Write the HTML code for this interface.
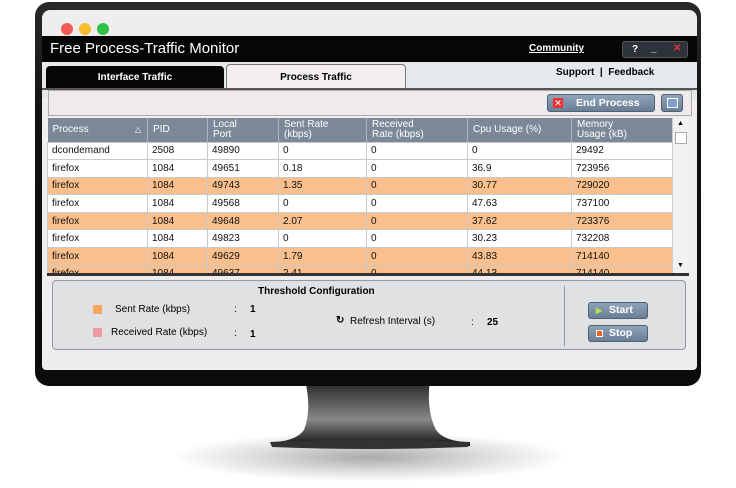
<!DOCTYPE html><html><head><style>
*{margin:0;padding:0;box-sizing:border-box}
body{width:736px;height:488px;background:#fff;font-family:"Liberation Sans",sans-serif;position:relative;overflow:hidden}
.abs{position:absolute}
.bezel{left:35px;top:2px;width:666px;height:384px;background:linear-gradient(#2a2a2a,#111 30%,#0b0b0b);border-radius:14px}
.screen{left:42px;top:10px;width:655px;height:360px;background:#efedee;border-radius:8px 8px 4px 4px;overflow:hidden}
.dot{width:12px;height:12px;border-radius:50%;top:13px}
table{border-collapse:collapse;font-size:10px;color:#111}
td{height:17.6px;border:1px solid #c9c9c9;padding-left:4px;white-space:nowrap}
th{background:#7a8898;color:#fff;font-weight:normal;text-align:left;padding-left:5px;height:24px;border-right:1px solid #aab4c0;font-size:10px;line-height:10px}
tr.o td{background:#f9c08d}
tr.w td{background:#fff}
.btn{background:linear-gradient(#8fa3b8,#6a7f96);border:1px solid #4d6278;border-radius:3px;color:#fff;font-weight:bold;font-size:10.5px}
</style></head><body>
<div class="abs" style="left:170px;top:432px;width:400px;height:50px;border-radius:50%;background:radial-gradient(ellipse,#aaa 0%,#ddd 40%,rgba(255,255,255,0) 70%)"></div>
<svg class="abs" style="left:270px;top:380px" width="200" height="80"><defs><linearGradient id="v" y1="0" y2="1" x1="0" x2="0"><stop offset="0" stop-color="#222"/><stop offset=".6" stop-color="#888"/><stop offset="1" stop-color="#111"/></linearGradient></defs>
<path d="M35 0 H160 Q156 30 166 50 Q175 62 200 62 L200 66 H2 L0 62 Q25 62 34 50 Q42 30 35 0 Z" fill="url(#v)"/>
<path d="M0 62 Q100 58 200 62 L198 67 Q100 71 2 67Z" fill="#333"/></svg>
<div class="abs bezel"></div>
<div class="abs screen">
 <div class="abs dot" style="left:19px;background:#f25a55"></div>
 <div class="abs dot" style="left:37px;background:#f8bd2c"></div>
 <div class="abs dot" style="left:55px;background:#2fc346"></div>
 <div class="abs" style="left:0;top:26px;width:655px;height:26px;background:#060606"></div>
 <div class="abs" style="left:8px;top:30px;color:#fff;font-size:15px">Free Process-Traffic Monitor</div>
 <div class="abs" style="left:487px;top:33px;color:#fff;font-size:10px;text-decoration:underline;font-weight:bold">Community</div>
 <div class="abs" style="left:580px;top:31px;width:66px;height:17px;background:#2c333b;border:1px solid #555;border-radius:3px;color:#fff;font-size:10px;font-weight:bold"><span class="abs" style="left:9px;top:2px">?</span><span class="abs" style="left:28px;top:1px">_</span><span class="abs" style="left:50px;top:1px;color:#e33">✕</span></div>
 <div class="abs" style="left:0;top:52px;width:655px;height:36px;background:#e6e9ec"></div>
 <div class="abs" style="left:4px;top:56px;width:178px;height:22px;background:#060606;border-radius:4px 4px 0 0;color:#fff;font-weight:bold;font-size:10px;text-align:center;line-height:24px">Interface Traffic</div>
 <div class="abs" style="left:184px;top:54px;width:180px;height:24px;background:#f2eef0;border:1px solid #777;border-bottom:none;border-radius:4px 4px 0 0;font-weight:bold;font-size:10px;text-align:center;line-height:26px">Process Traffic</div>
 <div class="abs" style="left:514px;top:57px;font-weight:bold;font-size:10px">Support &nbsp;|&nbsp; Feedback</div>
 <div class="abs" style="left:0;top:78px;width:655px;height:2px;background:#555"></div>
 <div class="abs" style="left:6px;top:80px;width:644px;height:26px;border:1px solid #aaa;background:#efeaec"></div>
 <div class="abs btn" style="left:505px;top:84px;width:108px;height:18px;line-height:16px;padding-left:28px">End Process</div>
 <div class="abs" style="left:511px;top:88px;width:10px;height:10px;background:#e33;color:#fff;font-size:9px;line-height:10px;text-align:center">✕</div>
 <div class="abs btn" style="left:619px;top:84px;width:22px;height:18px"><div class="abs" style="left:5px;top:3px;width:11px;height:10px;border:1px solid #fff;background:#7fa0cf"></div></div>
 <table class="abs" style="left:5px;top:108px;width:626px;table-layout:fixed">
 <colgroup><col style="width:100px"><col style="width:60px"><col style="width:71px"><col style="width:88px"><col style="width:101px"><col style="width:104px"><col style="width:102px"></colgroup>
 <tr><th>Process <span style="float:right;margin-right:6px;font-size:8px">△</span></th><th>PID</th><th>Local<br>Port</th><th>Sent Rate<br>(kbps)</th><th>Received<br>Rate (kbps)</th><th>Cpu Usage (%)</th><th>Memory<br>Usage (kB)</th></tr>
 <tr class="w"><td>dcondemand</td><td>2508</td><td>49890</td><td>0</td><td>0</td><td>0</td><td>29492</td></tr>
 <tr class="w"><td>firefox</td><td>1084</td><td>49651</td><td>0.18</td><td>0</td><td>36.9</td><td>723956</td></tr>
 <tr class="o"><td>firefox</td><td>1084</td><td>49743</td><td>1.35</td><td>0</td><td>30.77</td><td>729020</td></tr>
 <tr class="w"><td>firefox</td><td>1084</td><td>49568</td><td>0</td><td>0</td><td>47.63</td><td>737100</td></tr>
 <tr class="o"><td>firefox</td><td>1084</td><td>49648</td><td>2.07</td><td>0</td><td>37.62</td><td>723376</td></tr>
 <tr class="w"><td>firefox</td><td>1084</td><td>49823</td><td>0</td><td>0</td><td>30.23</td><td>732208</td></tr>
 <tr class="o"><td>firefox</td><td>1084</td><td>49629</td><td>1.79</td><td>0</td><td>43.83</td><td>714140</td></tr>
 <tr class="o"><td>firefox</td><td>1084</td><td>49637</td><td>2.41</td><td>0</td><td>44.13</td><td>714140</td></tr>
 </table>
 <div class="abs" style="left:630px;top:108px;width:17px;height:155px;background:#f2f2f2;border-left:1px solid #ccc"><div class="abs" style="left:4px;top:2px;font-size:7px">▲</div><div class="abs" style="left:2px;top:14px;width:12px;height:12px;background:#fff;border:1px solid #aaa"></div><div class="abs" style="left:4px;top:144px;font-size:7px">▼</div></div>
 <div class="abs" style="left:5px;top:263px;width:642px;height:3px;background:#333"></div>
 <div class="abs" style="left:0;top:266px;width:655px;height:8px;background:#efedee"></div>
 <div class="abs" style="left:10px;top:270px;width:634px;height:70px;background:#dfe1e2;border:1px solid #8f9aa6;border-radius:4px;font-size:10px">
  <div class="abs" style="left:205px;top:5px;font-weight:bold">Threshold Configuration</div>
  <div class="abs" style="left:40px;top:24px;width:9px;height:9px;background:#f6a860"></div>
  <div class="abs" style="left:62px;top:23px">Sent Rate (kbps)</div>
  <div class="abs" style="left:181px;top:23px">:</div><div class="abs" style="left:197px;top:23px;font-weight:bold">1</div>
  <div class="abs" style="left:40px;top:47px;width:9px;height:9px;background:#ef9aa0"></div>
  <div class="abs" style="left:58px;top:46px">Received Rate (kbps)</div>
  <div class="abs" style="left:181px;top:47px">:</div><div class="abs" style="left:197px;top:48px;font-weight:bold">1</div>
  <div class="abs" style="left:283px;top:34px;font-weight:bold">↻</div>
  <div class="abs" style="left:297px;top:35px">Refresh Interval (s)</div>
  <div class="abs" style="left:418px;top:36px">:</div><div class="abs" style="left:434px;top:36px;font-weight:bold">25</div>
  <div class="abs" style="left:511px;top:5px;width:1px;height:60px;background:#8f9aa6"></div>
  <div class="abs btn" style="left:535px;top:21px;width:60px;height:17px;line-height:15px;padding-left:20px"><span style="color:#b6e04a;position:absolute;left:7px;font-size:8px">▶</span>Start</div>
  <div class="abs btn" style="left:535px;top:44px;width:60px;height:17px;line-height:15px;padding-left:20px"><span style="position:absolute;left:7px;top:4px;width:7px;height:7px;background:#f06020;border:1px solid #fff"></span>Stop</div>
 </div>
</div>
</body></html>
